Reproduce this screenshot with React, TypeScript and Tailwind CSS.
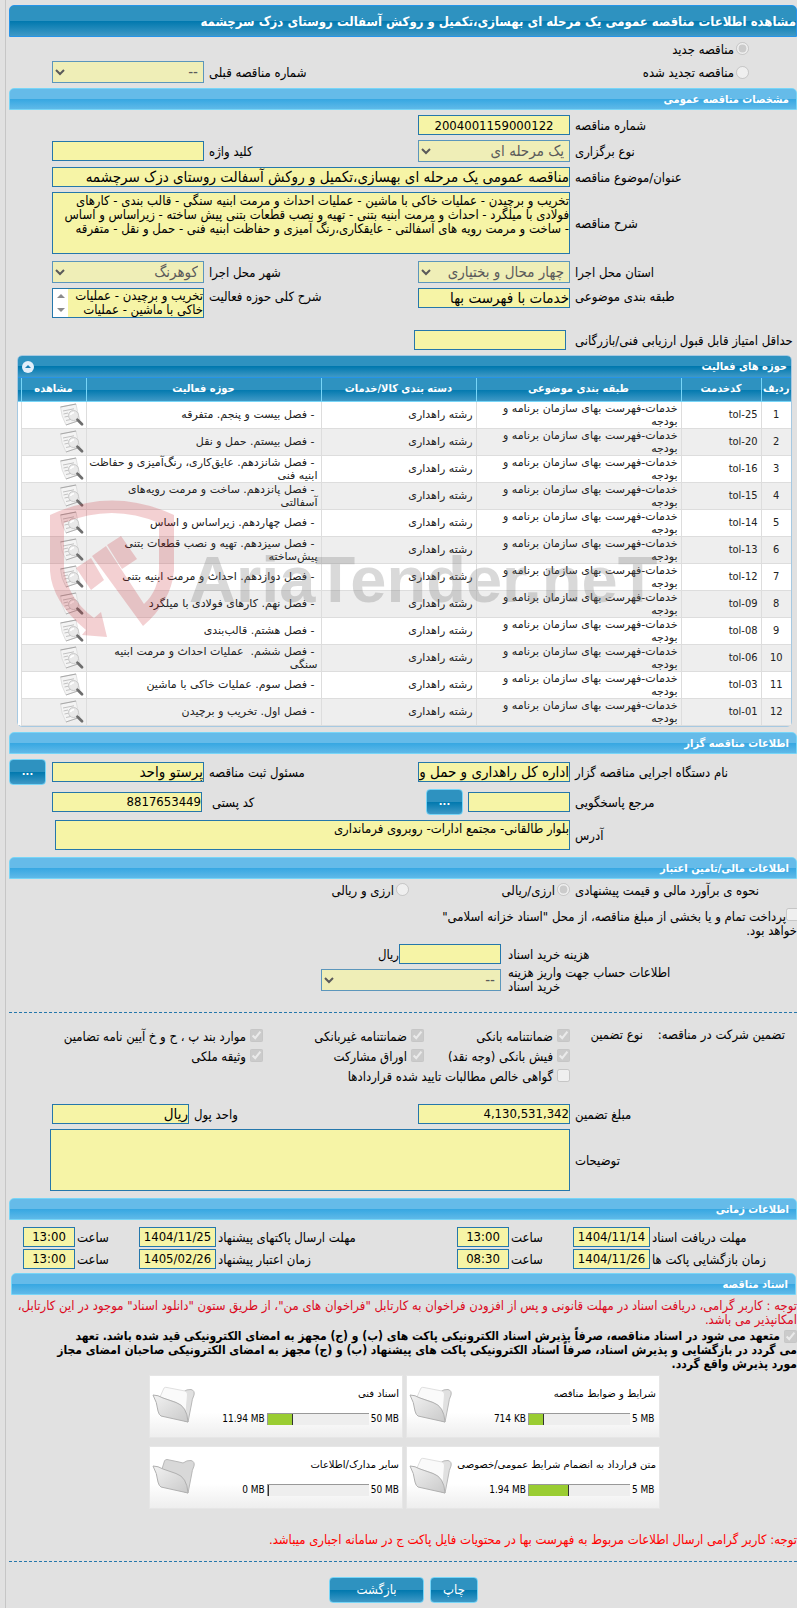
import type { ReactNode } from 'react'

const field =
  'block h-5 w-full border border-[#2577ab] bg-[#f6f4a6] px-0 text-[15px] leading-[18px] text-black outline-none'
const numField =
  'block h-5 w-full border border-[#2577ab] bg-[#f6f4a6] px-0 text-[13px] leading-[18px] text-black outline-none'
const area =
  'block w-full resize-none overflow-hidden border border-[#2577ab] bg-[#f6f4a6] p-0 pt-px text-[13px] leading-[14px] text-black outline-none'
const dark = 'bg-[linear-gradient(#2e92c0_50%,#0078ae_50%,#3f99c6)]'
const wide = "font-['DejaVu_Sans',sans-serif]"
const formRow = 'grid grid-cols-[227px_152px_1fr_152px_43px] items-center'

const activities = [
  { code: 'tol-25', text: ['- فصل بیست و پنجم. متفرقه'] },
  { code: 'tol-20', text: ['- فصل بیستم. حمل و نقل'] },
  { code: 'tol-16', text: ['- فصل شانزدهم. عایق‌کاری، رنگ‌آمیزی و حفاظت', 'ابنیه فنی'] },
  { code: 'tol-15', text: ['- فصل پانزدهم. ساخت و مرمت رویه‌های', 'آسفالتی'] },
  { code: 'tol-14', text: ['- فصل چهاردهم. زیراساس و اساس'] },
  { code: 'tol-13', text: ['- فصل سیزدهم. تهیه و نصب قطعات بتنی', 'پیش‌ساخته'] },
  { code: 'tol-12', text: ['- فصل دوازدهم. احداث و مرمت ابنیه بتنی'] },
  { code: 'tol-09', text: ['- فصل نهم. کارهای فولادی با میلگرد'] },
  { code: 'tol-08', text: ['- فصل هشتم. قالب‌بندی'] },
  { code: 'tol-06', text: ['- فصل ششم.  عملیات احداث و مرمت ابنیه', 'سنگی'] },
  { code: 'tol-03', text: ['- فصل سوم. عملیات خاکی با ماشین'] },
  { code: 'tol-01', text: ['- فصل اول. تخریب و برچیدن'] },
]

const documents = [
  { title: 'شرایط و ضوابط مناقصه', used: '714 KB', total: '5 MB', percent: 15, full: true },
  { title: 'اسناد فنی', used: '11.94 MB', total: '50 MB', percent: 25, full: true },
  { title: 'متن قرارداد به انضمام شرایط عمومی/خصوصی', used: '1.94 MB', total: '5 MB', percent: 40, full: true },
  { title: 'سایر مدارک/اطلاعات', used: '0 MB', total: '50 MB', percent: 1, full: false },
]

function SectionBar({ children }: { children: ReactNode }) {
  return (
    <h2 className="h-[22px] rounded-t-[5px] border border-[#77d5f7] bg-[linear-gradient(#65bbe9_50%,#36a7e2_50%,#5fb9e8)] pr-[7px] text-[11px] leading-[21px] font-bold text-white">
      {children}
    </h2>
  )
}

function Label({ id, children }: { id: string; children: ReactNode }) {
  return (
    <label htmlFor={id} className="block pt-[2px] pl-[5px] text-left whitespace-nowrap">
      {children}
    </label>
  )
}

function Select({ id, value }: { id: string; value: string }) {
  return (
    <select
      id={id}
      disabled
      className="block h-[22px] w-full border border-[#2577ab] bg-[#f6f4a6] pr-px text-[15px] leading-[18px] text-[#222222] opacity-70"
    >
      <option>{value}</option>
    </select>
  )
}

function Check({ label, checked = false }: { label: string; checked?: boolean }) {
  return (
    <label className="flex h-5 items-center gap-1 whitespace-nowrap">
      <input type="checkbox" disabled defaultChecked={checked} className="size-[13px]" />
      <span className="pt-[2px]">{label}</span>
    </label>
  )
}

function MoreButton({ label }: { label: string }) {
  return (
    <button
      type="button"
      aria-label={label}
      className={`h-[26px] w-[37px] rounded-[4px] border border-[#77d5f7] text-[11px] leading-[24px] font-bold text-white ${dark}`}
    >
      ...
    </button>
  )
}

function ViewIcon() {
  return (
    <svg width="25" height="24" viewBox="0 0 25 24" aria-hidden="true">
      <path d="M1.500 4 L17 1 Q18 8 21 17 L7 22 Q2 13 1.500 4Z" fill="#f4f4f4" stroke="#d5d5d5" strokeWidth="0.7" />
      <path d="M1.500 4 L17 1" stroke="#a8a8a8" strokeWidth="1.200" />
      <path
        d="M4 8 L15 5.800 M4.500 11 L9 10 M5.500 14 L9.500 13.200 M7 17.500 L12 16.400"
        stroke="#c2c2c2"
        strokeWidth="1"
        fill="none"
      />
      <path d="M7 22 L18 18.300" stroke="#ababab" strokeWidth="0.9" />
      <circle cx="14.500" cy="12.500" r="5" fill="#e9e9e9" stroke="#c4c4c4" strokeWidth="0.9" />
      <path d="M11.500 12 Q12 9.500 15 9.700" stroke="#ffffff" strokeWidth="1.600" fill="none" />
      <path d="M18.500 16.800 L23 21.300" stroke="#6e6e6e" strokeWidth="2.800" strokeLinecap="round" />
    </svg>
  )
}

function FolderIcon({ full }: { full: boolean }) {
  return (
    <svg width="44" height="40" viewBox="0 0 44 40" aria-hidden="true" className="shrink-0">
      <defs>
        <linearGradient id="folderFront" x1="0" y1="0" x2="1" y2="1">
          <stop offset="0" stopColor="#f2f2f2" />
          <stop offset="1" stopColor="#c9c9c9" />
        </linearGradient>
      </defs>
      <path
        d="M10 12 L12.500 4 Q13 2.500 15 2.500 L27 5 Q29 5.500 31 6 Q35 3 39 3.500 Q43 4.500 42 9 Q40 13 39.500 18 L36 36 L12 28Z"
        fill={full ? '#e0e0e0' : '#d8d8d8'}
        stroke="#b8b8b8"
      />
      {full && (
        <path d="M8 11 L12 2 Q13 1 15 1.500 L33 5 Q36 6 35.500 9 L34 27 Q30 19 23 16 Z" fill="#fafafa" stroke="#e0e0e0" />
      )}
      <path
        d="M1 9 Q6 9 11 12 L24 16.500 Q35 20 36 36 L9 30 Q7 29 6 25 Q5 16 1 9Z"
        fill="url(#folderFront)"
        stroke="#b0b0b0"
        strokeLinejoin="round"
      />
    </svg>
  )
}

function Watermark() {
  return (
    <svg
      width="612"
      height="150"
      viewBox="0 0 612 150"
      aria-hidden="true"
      direction="ltr"
      className="pointer-events-none absolute top-[140px] left-8"
    >
      <g fill="#c4202c" fillOpacity="0.21" transform="translate(0 4)">
        <path d="M0 15 Q62 -14 124 15 L124 71 Q121 102 93 126 L42 56 L56 46 L94 104 Q109 90 109 68 L109 23 Q62 3 14 23 L14 68 Q17 98 44 118 L51 112 L57 137 L32 135 L36 130 Q2 102 0 71Z" />
        <path d="M57 45 L71 36 L87 59 L72 69Z M26 68 L41 58 L54 80 L41 90Z" />
      </g>
      <text
        x="139"
        y="106"
        direction="ltr"
        fill="#6b6b6b"
        fillOpacity="0.26"
        fontSize="65"
        fontWeight="700"
        fontFamily="'Liberation Sans', sans-serif"
      >
        AriaTender.neT
      </text>
    </svg>
  )
}

function TimeField({ id, label, value }: { id: string; label: string; value: string }) {
  return (
    <>
      <label htmlFor={id} className="pt-[2px] pl-[2px] text-left whitespace-nowrap">
        {label}
      </label>
      <input id={id} readOnly defaultValue={value} className={`${numField} text-center`} />
    </>
  )
}

export default function App() {
  return (
    <div
      dir="rtl"
      className="overflow-hidden bg-[#e1e1e1] pl-[5px] font-['DejaVu_Sans_Condensed','DejaVu_Sans',sans-serif] text-[13px] leading-[14px] text-black"
    >
      <main className="border-l border-[#c6c6c6] pt-[5px] pb-[5px] pl-[3px]">
        <h1
          className={`h-8 rounded-t-[5px] border border-[#2694e8] text-[13px] leading-[32px] font-bold whitespace-nowrap text-white ${dark}`}
        >
          مشاهده اطلاعات مناقصه عمومی یک مرحله ای بهسازی،تکمیل و روکش آسفالت روستای دزک سرچشمه
        </h1>

        <label className="flex h-[23px] items-center gap-[2px] pr-12">
          <input type="radio" name="kind" disabled defaultChecked className="size-[13px]" />
          <span className="pt-[2px]">مناقصه جدید</span>
        </label>
        <div className="mt-px grid grid-cols-[379px_1fr_152px_43px] items-center">
          <label className="flex items-center gap-[2px] pr-12">
            <input type="radio" name="kind" disabled className="size-[13px]" />
            <span className="pt-[2px]">مناقصه تجدید شده</span>
          </label>
          <Label id="prev">شماره مناقصه قبلی</Label>
          <Select id="prev" value="--" />
        </div>

        <section className="mt-[5px]">
          <SectionBar>مشخصات مناقصه عمومی</SectionBar>
          <div className={`mt-[5px] ${formRow}`}>
            <Label id="number">شماره مناقصه</Label>
            <input id="number" readOnly defaultValue="2004001159000122" className={`${numField} text-center`} />
          </div>
          <div className={`mt-[5px] ${formRow}`}>
            <Label id="type">نوع برگزاری</Label>
            <Select id="type" value="یک مرحله ای" />
            <Label id="keyword">کلید واژه</Label>
            <input id="keyword" readOnly className={field} />
          </div>
          <div className={`mt-[5px] ${formRow}`}>
            <Label id="subject">عنوان/موضوع مناقصه</Label>
            <div className="col-span-3">
              <input
                id="subject"
                readOnly
                defaultValue="مناقصه عمومی یک مرحله ای بهسازی،تکمیل و روکش آسفالت روستای دزک سرچشمه"
                className={field}
              />
            </div>
          </div>
          <div className={`mt-[5px] ${formRow}`}>
            <Label id="desc">شرح مناقصه</Label>
            <div className="col-span-3">
              <textarea
                id="desc"
                readOnly
                className={`${area} h-[62px]`}
                defaultValue={
                  'تخریب و برچیدن - عملیات خاکی با ماشین - عملیات احداث و مرمت ابنیه سنگی - قالب بندی - کارهای\nفولادی با میلگرد - احداث و مرمت ابنیه بتنی - تهیه و نصب قطعات بتنی پیش ساخته - زیراساس و اساس\n- ساخت و مرمت رویه های آسفالتی - عایقکاری،رنگ آمیزی و حفاظت ابنیه فنی - حمل و نقل - متفرقه'
                }
              />
            </div>
          </div>
          <div className={`mt-[7px] ${formRow}`}>
            <Label id="state">استان محل اجرا</Label>
            <Select id="state" value="چهار محال و بختیاری" />
            <Label id="city">شهر محل اجرا</Label>
            <Select id="city" value="کوهرنگ" />
          </div>
          <div className="mt-[5px] grid grid-cols-[227px_152px_1fr_152px_43px] items-start">
            <Label id="class">طبقه بندی موضوعی</Label>
            <input id="class" readOnly defaultValue="خدمات با فهرست بها" className={field} />
            <Label id="scope">شرح کلی حوزه فعالیت</Label>
            <div className="flex h-[30px] border border-[#2577ab] bg-[#f6f4a6]">
              <textarea
                id="scope"
                readOnly
                defaultValue={'تخریب و برچیدن - عملیات\nخاکی با ماشین - عملیات'}
                className="block h-7 min-w-0 grow resize-none overflow-hidden p-0 text-[13px] leading-[14px] outline-none"
              />
              <div className="flex w-[15px] flex-col items-center justify-between bg-white py-[5px]">
                <svg width="8" height="4" aria-hidden="true">
                  <path d="M0 4 L4 0 L8 4Z" fill="#8b8b8b" />
                </svg>
                <svg width="8" height="4" aria-hidden="true">
                  <path d="M0 0 L4 4 L8 0Z" fill="#8b8b8b" />
                </svg>
              </div>
            </div>
          </div>
          <div className="mt-3 grid grid-cols-[231px_152px] items-center">
            <label htmlFor="score" className="pt-[2px] pl-[9px] text-left whitespace-nowrap">
              حداقل امتیاز قابل قبول ارزیابی فنی/بازرگانی
            </label>
            <input id="score" readOnly className={field} />
          </div>
        </section>

        <section className="relative mt-[5px] mr-[5px] ml-2 rounded-[5px] border border-[#a6c9e2] bg-white text-[11px] leading-[13px] text-[#222222]">
          <div
            className={`flex h-[22px] items-center justify-between rounded-t-[4px] border-b border-[#2694e8] px-1 font-bold text-white ${dark}`}
          >
            <h3 className="text-[11px]">حوزه های فعالیت</h3>
            <button type="button" aria-label="بستن" className="grid size-3 place-items-center rounded-full bg-[#e3effa]">
              <svg width="6" height="3" aria-hidden="true">
                <path d="M0 3 L3 0 L6 3Z" fill="#1b7fb4" />
              </svg>
            </button>
          </div>
          <table className="w-full table-fixed border-collapse overflow-hidden">
            <colgroup>
              <col className="w-[30px]" />
              <col className="w-[80px]" />
              <col className="w-[205px]" />
              <col className="w-[155px]" />
              <col />
              <col className="w-[65px]" />
              <col className="w-[3px]" />
            </colgroup>
            <thead>
              <tr className={`h-[23px] text-white ${dark}`}>
                {['ردیف', 'کدخدمت', 'طبقه بندی موضوعی', 'دسته بندی کالا/خدمات', 'حوزه فعالیت', 'مشاهده'].map((h) => (
                  <th key={h} className="border-b border-l border-[#77d5f7] p-0 pb-[2px] whitespace-nowrap">
                    {h}
                  </th>
                ))}
                <td className="border-b border-[#77d5f7]" />
              </tr>
            </thead>
            <tbody>
              {activities.map((row, i) => (
                <tr key={row.code} className="h-[27px] even:bg-[#eeeeee]">
                  <td className="border-b border-l border-[#dddddd] p-0 text-center">{i + 1}</td>
                  <td className="border-b border-l border-[#dddddd] p-0 pr-[3px]">
                    <bdi>{row.code}</bdi>
                  </td>
                  <td className={`border-b border-l border-[#dddddd] p-0 pr-[3px] whitespace-nowrap ${wide}`}>
                    خدمات-فهرست بهای سازمان برنامه و<br />
                    بودجه
                  </td>
                  <td className={`border-b border-l border-[#dddddd] p-0 pr-[3px] ${wide}`}>رشته راهداری</td>
                  <td className={`border-b border-l border-[#dddddd] p-0 pr-[3px] whitespace-pre ${wide}`}>
                    {row.text.map((line, n) => (
                      <div key={line} className={n === 0 ? 'pr-[3px]' : ''}>
                        {line}
                      </div>
                    ))}
                  </td>
                  <td className="border-b border-l border-[#dddddd] p-0 pr-[2px]">
                    <button type="button" aria-label="مشاهده" className="block">
                      <ViewIcon />
                    </button>
                  </td>
                  <td className="bg-white p-0" />
                </tr>
              ))}
            </tbody>
          </table>
          <Watermark />
        </section>

        <section className="mt-[5px]">
          <SectionBar>اطلاعات مناقصه گزار</SectionBar>
          <div className={`mt-[5px] ${formRow}`}>
            <Label id="org">نام دستگاه اجرایی مناقصه گزار</Label>
            <input id="org" readOnly defaultValue="اداره کل راهداری و حمل و نقل جاده ای" className={field} />
            <Label id="owner">مسئول ثبت مناقصه</Label>
            <input id="owner" readOnly defaultValue="پرستو واحد" className={field} />
            <div className="flex justify-end">
              <MoreButton label="مسئول ثبت مناقصه" />
            </div>
          </div>
          <div className={`mt-1 ${formRow}`}>
            <Label id="ref">مرجع پاسخگویی</Label>
            <div className="flex items-center gap-[5px]">
              <input id="ref" readOnly className="block h-5 w-[102px] border border-[#2577ab] bg-[#f6f4a6]" />
              <MoreButton label="مرجع پاسخگویی" />
            </div>
            <label htmlFor="post" className="pt-[2px] pl-2 text-left">
              کد پستی
            </label>
            <div className="pr-[2px]">
              <input id="post" readOnly defaultValue="8817653449" className={numField} />
            </div>
          </div>
          <div className={`mt-[5px] ${formRow}`}>
            <Label id="address">آدرس</Label>
            <div className="col-span-3 pl-[3px]">
              <textarea
                id="address"
                readOnly
                defaultValue="بلوار طالقانی- مجتمع ادارات- روبروی فرمانداری"
                className={`${area} h-[30px]`}
              />
            </div>
          </div>
        </section>

        <section className="mt-[7px]">
          <SectionBar>اطلاعات مالی/تامین اعتبار</SectionBar>
          <div className="flex h-[22px] items-center">
            <span className="w-[227px] pt-[2px] pl-[5px] text-left whitespace-nowrap">
              نحوه ی برآورد مالی و قیمت پیشنهادی
            </span>
            <label className="flex w-[161px] items-center gap-[2px]">
              <input type="radio" name="currency" disabled defaultChecked className="size-[13px]" />
              <span className="pt-[2px]">ارزی/ریالی</span>
            </label>
            <label className="flex items-center gap-[2px]">
              <input type="radio" name="currency" disabled className="size-[13px]" />
              <span className="pt-[2px]">ارزی و ریالی</span>
            </label>
          </div>
          <label className="mt-[7px] flex items-start">
            <input type="checkbox" disabled className="-mr-[2px] size-[13px] shrink-0" />
            <span className="pt-[2px] whitespace-nowrap">
              پرداخت تمام و یا بخشی از مبلغ مناقصه، از محل "اسناد خزانه اسلامی"
              <span className="-mr-[11px] block">خواهد بود.</span>
            </span>
          </label>
          <div className="mt-[6px] grid grid-cols-[296px_102px_1fr] items-center">
            <label htmlFor="fee" className="pt-[2px] pl-[7px] text-left">
              هزینه خرید اسناد
            </label>
            <input id="fee" readOnly className={field} />
            <span className="pt-[2px]">ریال</span>
          </div>
          <div className="mt-[2px] grid grid-cols-[296px_180px] items-center">
            <label htmlFor="account" className="pl-[7px] text-left whitespace-nowrap">
              اطلاعات حساب جهت واریز هزینه
              <br />
              خرید اسناد
            </label>
            <Select id="account" value="--" />
          </div>
        </section>

        <section className="mt-[18px] border-t border-dashed border-[#2577ab] pt-[13px]">
          <div className="flex items-start">
            <span className="w-[139px] pt-[2px] pr-3 whitespace-nowrap">تضمین شرکت در مناقصه:</span>
            <span className="w-[88px] pt-[2px] pr-[15px] whitespace-nowrap">نوع تضمین</span>
            <div>
              <div className="flex">
                <div className="w-[146px]">
                  <Check label="ضمانتنامه بانکی" checked />
                  <Check label="فیش بانکی (وجه نقد)" checked />
                </div>
                <div className="w-[161px]">
                  <Check label="ضمانتنامه غیربانکی" checked />
                  <Check label="اوراق مشارکت" checked />
                </div>
                <div>
                  <Check label="موارد بند پ ، ح و خ آیین نامه تضامین" checked />
                  <Check label="وثیقه ملکی" checked />
                </div>
              </div>
              <Check label="گواهی خالص مطالبات تایید شده قراردادها" />
            </div>
          </div>
          <div className="mt-[18px] grid grid-cols-[227px_152px_1fr_137px_43px] items-center">
            <Label id="amount">مبلغ تضمین</Label>
            <input id="amount" readOnly defaultValue="4,130,531,342" className={numField} />
            <Label id="unit">واحد پول</Label>
            <input id="unit" readOnly defaultValue="ریال" className={field} />
          </div>
          <div className="mt-[5px] grid grid-cols-[227px_1fr_41px] items-center">
            <Label id="notes">توضیحات</Label>
            <textarea id="notes" readOnly className={`${area} h-[62px]`} />
          </div>
        </section>

        <section className="mt-[7px]">
          <SectionBar>اطلاعات زمانی</SectionBar>
          <div className="mt-[7px] grid grid-cols-[147px_77px_64px_52px_1fr_77px_64px_52px_14px] items-center gap-y-[2px]">
            <TimeField id="d1" label="مهلت دریافت اسناد" value="1404/11/14" />
            <TimeField id="t1" label="ساعت" value="13:00" />
            <TimeField id="d2" label="مهلت ارسال پاکتهای پیشنهاد" value="1404/11/25" />
            <TimeField id="t2" label="ساعت" value="13:00" />
            <span />
            <TimeField id="d3" label="زمان بازگشایی پاکت ها" value="1404/11/26" />
            <TimeField id="t3" label="ساعت" value="08:30" />
            <TimeField id="d4" label="زمان اعتبار پیشنهاد" value="1405/02/26" />
            <TimeField id="t4" label="ساعت" value="13:00" />
          </div>
        </section>

        <section className="mt-1">
          <div className="mr-px ml-[2px]">
            <SectionBar>اسناد مناقصه</SectionBar>
          </div>
          <p className="mt-1 whitespace-nowrap text-[#dc0a1e]">
            توجه : کاربر گرامی، دریافت اسناد در مهلت قانونی و پس از افزودن فراخوان به کارتابل "فراخوان های من"، از طریق
            ستون "دانلود اسناد" موجود در این کارتابل،
            <br />
            امکانپذیر می باشد.
          </p>
          <label className="mt-[2px] block text-[12px] font-bold whitespace-nowrap">
            <input type="checkbox" disabled defaultChecked className="ml-1 inline-block size-[13px] align-bottom" />
            متعهد می شود در اسناد مناقصه، صرفاً پذیرش اسناد الکترونیکی پاکت های (ب) و (ج) مجهز به امضای الکترونیکی قید
            شده باشد. تعهد
            <br />
            می گردد در بازگشایی و پذیرش اسناد، صرفاً اسناد الکترونیکی پاکت های پیشنهاد (ب) و (ج) مجهز به امضای الکترونیکی
            صاحبان امضای مجاز
            <br />
            مورد پذیرش واقع گردد.
          </label>

          <div className="mt-1 grid grid-cols-[254px_254px] gap-x-[3px] gap-y-2 pr-[137px]">
            {documents.map((doc) => (
              <article
                key={doc.title}
                className="flex h-[63px] items-center border border-[#e6e6e6] bg-[linear-gradient(#ffffff_60%,#eeeeee)] pr-[3px] pl-[2px] text-[10px]"
              >
                <div className="min-w-0 grow">
                  <h3 className={`whitespace-nowrap ${wide}`}>{doc.title}</h3>
                  <div className="mt-[11px] flex items-center gap-[2px] whitespace-nowrap">
                    <bdi className="min-w-6">{doc.total}</bdi>
                    <div className="h-3 w-[102px] border-t border-l border-[#999999] bg-[#eeeeee]">
                      <div
                        className="mr-auto h-full border-r border-[#333333] bg-[#9acd32]"
                        style={{ width: `${doc.percent}%` }}
                      />
                    </div>
                    <bdi>{doc.used}</bdi>
                  </div>
                </div>
                <FolderIcon full={doc.full} />
              </article>
            ))}
          </div>

          <p className="mt-6 whitespace-nowrap text-[#ff0000]">
            توجه: کاربر گرامی ارسال اطلاعات مربوط به فهرست بها در محتویات فایل پاکت ج در سامانه اجباری میباشد.
          </p>
        </section>

        <footer className="mt-[14px] flex gap-[6px] border-t border-dashed border-[#2577ab] pt-[15px] pr-[319px]">
          <button
            type="button"
            className={`h-[26px] w-12 rounded-[4px] border border-[#77d5f7] text-[13px] text-white ${dark}`}
          >
            چاپ
          </button>
          <button
            type="button"
            className={`h-[26px] w-[95px] rounded-[4px] border border-[#77d5f7] text-[13px] text-white ${dark}`}
          >
            بازگشت
          </button>
        </footer>
      </main>
    </div>
  )
}
